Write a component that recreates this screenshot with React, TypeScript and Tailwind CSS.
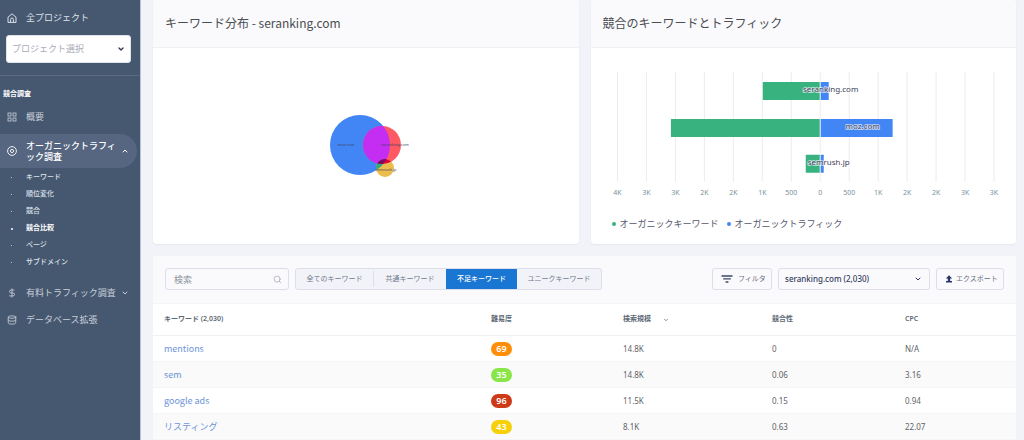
import { ChevronDown, ChevronUp, Database, DollarSign, Search } from "lucide-react";

interface KeywordRow {
  keyword: string;
  difficulty: number;
  badge: string;
  volume: string;
  competition: string;
  cpc: string;
}

const rows: KeywordRow[] = [
  { keyword: "mentions", difficulty: 69, badge: "bg-[#ff8f0a]", volume: "14.8K", competition: "0", cpc: "N/A" },
  { keyword: "sem", difficulty: 35, badge: "bg-[#8ae549]", volume: "14.8K", competition: "0.06", cpc: "3.16" },
  { keyword: "google ads", difficulty: 96, badge: "bg-[#cd3a17]", volume: "11.5K", competition: "0.15", cpc: "0.94" },
  { keyword: "リスティング", difficulty: 43, badge: "bg-[#f8d00a]", volume: "8.1K", competition: "0.63", cpc: "22.07" },
];

const subItems = ["キーワード", "順位変化", "競合", "競合比較", "ページ", "サブドメイン"];

const tabs = [
  { label: "全てのキーワード", width: "w-[78px]" },
  { label: "共通キーワード", width: "w-[72px]" },
  { label: "不足キーワード", width: "w-[71px]" },
  { label: "ユニークキーワード", width: "w-[84px]" },
];

const axisLabels = ["4K", "3K", "3K", "2K", "2K", "1K", "500", "0", "500", "1K", "2K", "2K", "3K", "3K"];

const bars = [
  { name: "seranking.com", y: 34, keywords: 57, traffic: 9, labelX: 240 },
  { name: "moz.com", y: 71, keywords: 149, traffic: 73, labelX: 272 },
  { name: "semrush.jp", y: 107, keywords: 14, traffic: 4, labelX: 238 },
];

const HomeIcon = () => (
  <svg viewBox="0 0 10 10" className="size-[10px]" fill="none" stroke="currentColor" strokeLinejoin="round">
    <path d="M1 4.2 5 .8l4 3.4v5.2H1z" />
    <path d="M3.6 9.2V6.4a1.4 1.4 0 0 1 2.8 0v2.8" />
  </svg>
);

const GridIcon = () => (
  <svg viewBox="0 0 10 10" className="size-[10px]" fill="none" stroke="currentColor" strokeWidth="0.8">
    <rect x="1" y="1" width="3" height="3" />
    <rect x="6" y="1" width="3" height="3" />
    <rect x="1" y="6" width="3" height="3" />
    <rect x="6" y="6" width="3" height="3" />
  </svg>
);

const TargetIcon = () => (
  <svg viewBox="0 0 10 10" className="size-[10px] shrink-0" fill="none" stroke="currentColor" strokeWidth="0.9">
    <circle cx="5" cy="5" r="4.4" />
    <circle cx="5" cy="5" r="1.6" />
  </svg>
);

const FilterIcon = () => (
  <svg viewBox="0 0 12 8" className="h-2 w-3" fill="none" stroke="#3d4663" strokeWidth="1.3">
    <path d="M.5 1h11M2.2 3.9h7.6M4.6 7h2.8" />
  </svg>
);

const ExportIcon = () => (
  <svg viewBox="0 0 8 8" className="size-2" fill="#2b3566">
    <path d="M4 .2 7.2 3.6H5.2V6H2.8V3.6H.8z" />
    <path d="M1 6h6v1.4H1z" />
  </svg>
);

const Sidebar = () => (
  <aside className="w-[141px] shrink-0 border-r border-[#b9c2d4] bg-[#465770] text-[9px] text-[#c9d0db]">
    <a href="#" className="flex h-[35px] items-center gap-[9px] pl-[7px] text-[#dde2ea]">
      <HomeIcon />
      全プロジェクト
    </a>
    <div className="relative mr-[9px] ml-[6px]">
      <select
        aria-label="プロジェクト選択"
        className="h-7 w-full appearance-none rounded-[3px] border border-[#dfe3ec] bg-white pl-[5px] text-[#a9abb6]"
      >
        <option>プロジェクト選択</option>
      </select>
      <ChevronDown className="pointer-events-none absolute top-[10px] right-[6px] size-2 text-[#30384a]" strokeWidth={4} />
    </div>
    <div className="mt-3 border-t border-[#5b6b84]" />
    <h2 className="mt-3 pl-[3px] text-[7px] leading-3 font-bold text-white">競合調査</h2>

    <nav>
      <a href="#" className="flex h-[34px] items-center gap-[9px] pl-[7px]">
        <GridIcon />
        概要
      </a>
      <a
        href="#"
        className="mr-[3px] flex h-[34px] items-center gap-[9px] rounded-r-full bg-[#566680] pr-2 pl-[7px] font-medium text-white"
      >
        <TargetIcon />
        <span className="min-w-0 flex-1 leading-[11px] whitespace-nowrap">
          オーガニックトラフィ
          <br />
          ック調査
        </span>
        <ChevronUp className="size-2 shrink-0" strokeWidth={3} />
      </a>
      <ul className="pt-px text-[7px]">
        {subItems.map((item) => {
          const active = item === "競合比較";
          return (
            <li key={item}>
              <a
                href="#"
                className={`flex h-[17px] items-center gap-[13px] pl-[11px] ${active ? "font-bold text-white" : "font-medium text-[#dde2ea]"}`}
              >
                <span className={active ? "size-[2px] rounded-full bg-white" : "mr-px size-px bg-[#b8c1cf]"} />
                {item}
              </a>
            </li>
          );
        })}
      </ul>
      <a href="#" className="mt-2 flex h-[27px] items-center gap-[9px] pr-[11px] pl-[7px]">
        <DollarSign className="size-[10px] shrink-0" />
        <span className="min-w-0 flex-1 whitespace-nowrap">有料トラフィック調査</span>
        <ChevronDown className="size-2 shrink-0" strokeWidth={3} />
      </a>
      <a href="#" className="flex h-[27px] items-center gap-[9px] pl-[7px]">
        <Database className="size-[10px]" />
        データベース拡張
      </a>
    </nav>
  </aside>
);

const VennChart = () => (
  <svg viewBox="0 0 80 64" className="h-16 w-20 overflow-visible" role="img" aria-label="キーワード分布">
    <defs>
      <clipPath id="moz">
        <circle cx="34" cy="31" r="30" />
      </clipPath>
      <clipPath id="seranking">
        <circle cx="56" cy="31" r="19" />
      </clipPath>
    </defs>
    <circle cx="34" cy="31" r="30" fill="#4285f4" />
    <circle cx="56" cy="31" r="19" fill="#ff5964" />
    <circle cx="59" cy="54" r="9" fill="#ecbc4c" />
    <circle cx="56" cy="31" r="19" fill="#c42df2" clipPath="url(#moz)" />
    <circle cx="59" cy="54" r="9" fill="#35a882" clipPath="url(#moz)" />
    <g clipPath="url(#seranking)">
      <circle cx="59" cy="54" r="9" fill="#e0003c" />
      <circle cx="59" cy="54" r="9" fill="#7b0a64" clipPath="url(#moz)" />
    </g>
    <g fontSize="4" fill="#3f4663" textAnchor="middle">
      <text x="20" y="32">moz.com</text>
      <text x="69" y="32">seranking.com</text>
      <text x="60" y="57">semrush.jp</text>
    </g>
  </svg>
);

const BarChart = () => (
  <svg viewBox="0 0 426 154" className="w-full" role="img" aria-label="競合のキーワードとトラフィック">
    {axisLabels.map((label, i) => (
      <g key={i}>
        <path d={`M${26.5 + i * 29} 24v110`} stroke="#ececef" />
        <text x={26.5 + i * 29} y="147" fontSize="7" fill="#78909c" textAnchor="middle">
          {label}
        </text>
      </g>
    ))}
    {bars.map((bar) => (
      <g key={bar.name}>
        <rect x={229 - bar.keywords} y={bar.y} width={bar.keywords} height="18" rx="0.5" fill="#38b27f" />
        <rect x="230" y={bar.y} width={bar.traffic - 1} height="18" rx="0.5" fill="#4285f4" />
        <text
          x={bar.labelX}
          y={bar.y + 10}
          fontSize="8"
          fill="#3f4058"
          stroke="#fff"
          strokeOpacity="0.75"
          strokeWidth="1.5"
          paintOrder="stroke"
          textAnchor="middle"
        >
          {bar.name}
        </text>
      </g>
    ))}
  </svg>
);

const cardTitle =
  "h-12 border-b border-[#f0f0f4] bg-[#fafafc] px-3 font-['Noto_Sans_CJK_JP',sans-serif] text-[12px] leading-[46px] font-normal text-[#4a4d52]";

const outlined = "h-[22px] rounded-[3px] border border-[#dcdeea] bg-[#fafafc]";

const Toolbar = () => (
  <div className="flex h-12 items-center gap-[6px] border-b border-[#f4f4f7] bg-[#fafafc] px-3">
    <div className="relative w-[124px]">
      <input
        type="search"
        aria-label="検索"
        placeholder="検索"
        className={`${outlined} block w-full pl-2 text-[9px] placeholder:text-[#8d929d]`}
      />
      <Search className="absolute top-[7px] right-[7px] size-[9px] text-[#a3a8ba]" />
    </div>
    <div className="flex h-[22px] overflow-hidden rounded-[3px] border border-[#dcdeea] bg-[#f2f3f8]">
      {tabs.map((tab, i) => (
        <button
          key={tab.label}
          type="button"
          className={`${tab.width} text-[7px] ${i === 2 ? "bg-[#1976d2] font-medium text-white" : "text-[#70798a]"}`}
        >
          <span className={`block leading-4 ${i === 0 ? "border-r border-[#dcdeea]" : ""}`}>{tab.label}</span>
        </button>
      ))}
    </div>
    <button type="button" className={`${outlined} ml-auto flex w-[60px] items-center gap-[5px] pl-2 text-[7px] text-[#6a6f80]`}>
      <FilterIcon />
      フィルタ
    </button>
    <div className="relative w-[152px]">
      <select aria-label="ドメイン" className={`${outlined} block w-full appearance-none pl-[6px] text-[8px] font-medium text-[#333c5c]`}>
        <option>seranking.com (2,030)</option>
      </select>
      <ChevronDown className="pointer-events-none absolute top-[7px] right-2 size-2 text-[#2b3566]" strokeWidth={3} />
    </div>
    <button type="button" className={`${outlined} flex w-[68px] items-center gap-[3px] pl-2 text-[7px] text-[#6a6f80]`}>
      <ExportIcon />
      エクスポート
    </button>
  </div>
);

const KeywordTable = () => (
  <table className="w-full table-fixed text-left text-[8px] text-[#5f6368]">
    <colgroup>
      <col className="w-[327px]" />
      <col className="w-[132px]" />
      <col className="w-[149px]" />
      <col className="w-[133px]" />
      <col />
    </colgroup>
    <thead>
      <tr className="h-8 border-b border-[#f0f1f5] text-[7px] text-[#5d6975] [&>th]:pl-[11px] [&>th]:font-semibold">
        <th>キーワード (2,030)</th>
        <th>難易度</th>
        <th>
          <span className="flex items-center gap-3">
            検索規模
            <ChevronDown className="size-[6px]" strokeWidth={3} />
          </span>
        </th>
        <th>競合性</th>
        <th>CPC</th>
      </tr>
    </thead>
    <tbody>
      {rows.map((row) => (
        <tr key={row.keyword} className="h-[26px] border-b border-[#f4f5f7] even:bg-[#fafafa] [&>td]:pl-[11px]">
          <td>
            <a href="#" className="font-['Noto_Sans_CJK_JP',sans-serif] text-[9px] text-[#6b93d8]">
              {row.keyword}
            </a>
          </td>
          <td>
            <span className={`${row.badge} block w-[21px] rounded-full text-center text-[9px] leading-[14px] font-semibold text-white`}>
              {row.difficulty}
            </span>
          </td>
          <td>{row.volume}</td>
          <td>{row.competition}</td>
          <td>{row.cpc}</td>
        </tr>
      ))}
    </tbody>
  </table>
);

export default function App() {
  return (
    <div className="flex min-h-screen bg-[#f2f3f8] font-['Noto_Sans','Noto_Sans_CJK_JP',sans-serif]">
      <Sidebar />
      <main className="flex min-w-0 flex-1 flex-col gap-3 pr-2 pl-3">
        <div className="grid grid-cols-2 gap-3">
          <section className="flex flex-col overflow-hidden rounded-[4px] bg-white shadow-xs">
            <h2 className={cardTitle}>キーワード分布 - seranking.com</h2>
            <div className="flex flex-1 items-center justify-center">
              <VennChart />
            </div>
          </section>
          <section className="overflow-hidden rounded-[4px] bg-white shadow-xs">
            <h2 className={cardTitle}>競合のキーワードとトラフィック</h2>
            <BarChart />
            <div className="flex h-[42px] gap-2 pt-[14px] pl-[21px] text-[9px] leading-4 text-[#55576b]">
              <span className="flex h-4 items-center gap-1">
                <i className="size-1 rounded-full bg-[#38b27f]" />
                オーガニックキーワード
              </span>
              <span className="flex h-4 items-center gap-1">
                <i className="size-1 rounded-full bg-[#4285f4]" />
                オーガニックトラフィック
              </span>
            </div>
          </section>
        </div>
        <section className="flex-1 overflow-hidden rounded-t-[4px] bg-white">
          <Toolbar />
          <KeywordTable />
        </section>
      </main>
    </div>
  );
}
